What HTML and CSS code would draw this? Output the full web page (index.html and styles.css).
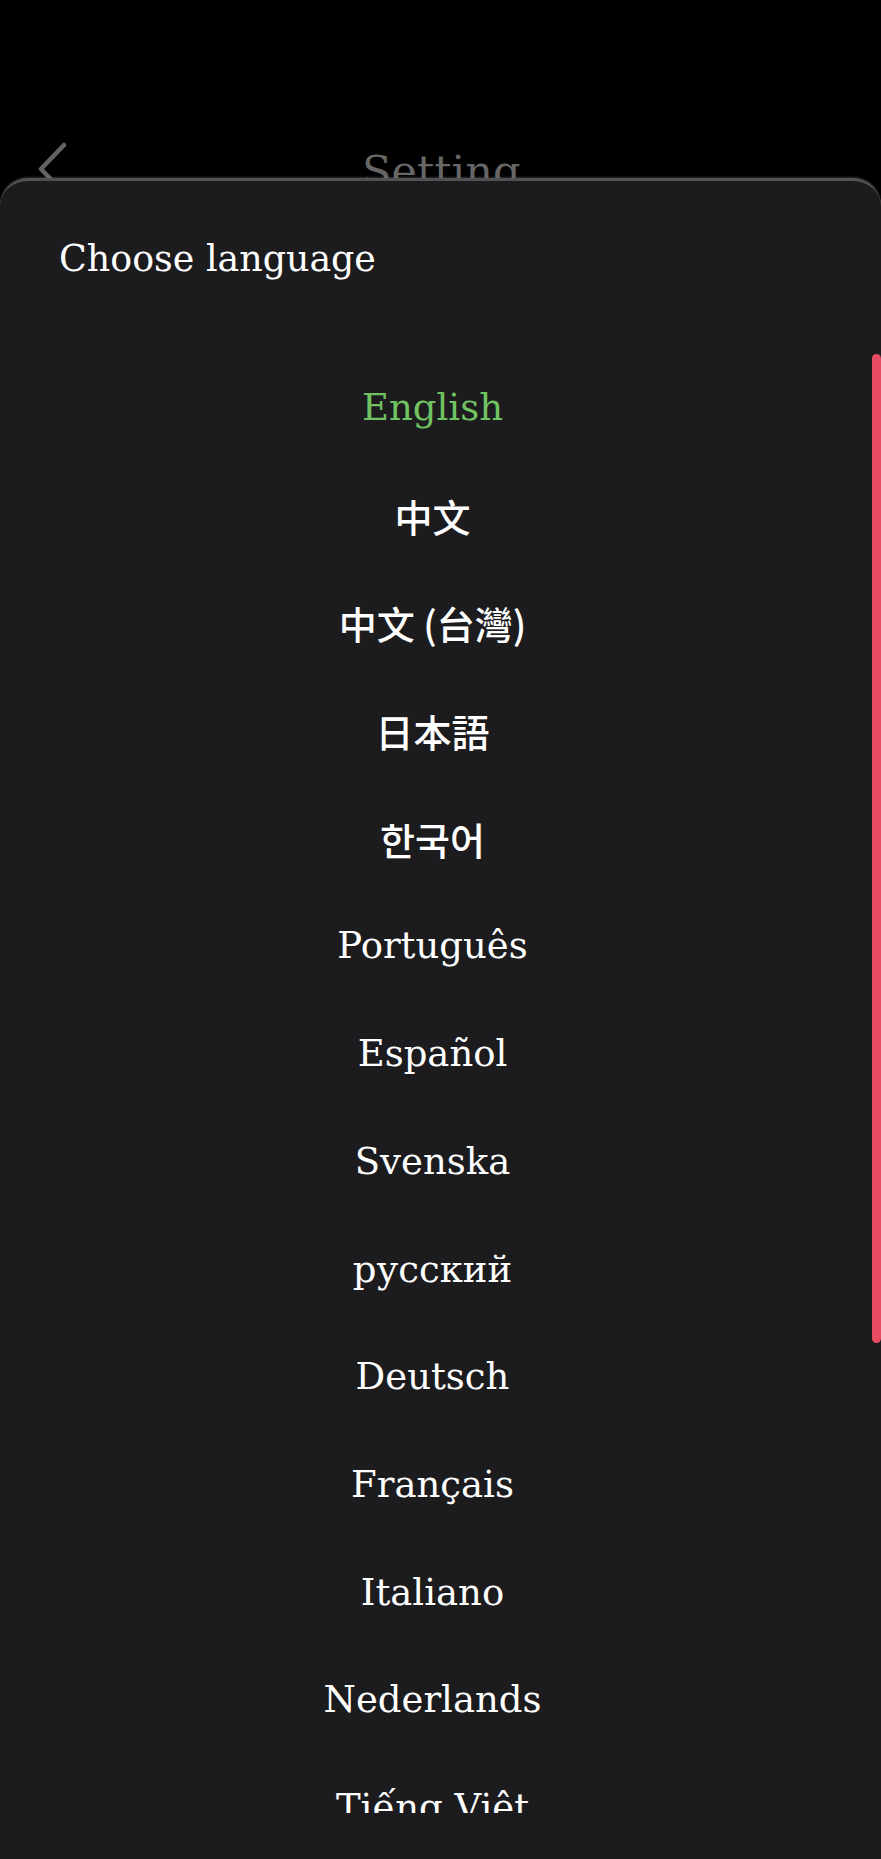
FILE: index.html
```html
<!DOCTYPE html>
<html lang="en">
<head>
    <meta charset="UTF-8">
    <meta name="viewport" content="width=device-width, initial-scale=1.0">
    <title>Setting</title>
    <link rel="stylesheet" href="styles.css">
</head>
<body>
    <!-- Header behind the sheet -->
    <header class="topbar">
        <svg class="back" width="40" height="60" viewBox="0 0 40 60">
            <path d="M26 4 L3 28 L26 52" fill="none" stroke="#636363" stroke-width="4.5" stroke-linecap="round" stroke-linejoin="round"/>
        </svg>
        <h1 class="title">Setting</h1>
    </header>

    <!-- Bottom sheet -->
    <div class="sheet">
        <h2 class="sheet-title">Choose language</h2>
        <ul class="lang-list">
            <li class="active">English</li>
            <li class="cjk" lang="zh-CN">中文</li>
            <li class="cjk tc" lang="zh-TW">中文 (台灣)</li>
            <li class="cjk jp" lang="ja">日本語</li>
            <li class="cjk kr" lang="ko">한국어</li>
            <li>Português</li>
            <li>Español</li>
            <li>Svenska</li>
            <li>русский</li>
            <li>Deutsch</li>
            <li>Français</li>
            <li>Italiano</li>
            <li>Nederlands</li>
            <li>Tiếng Việt</li>
        </ul>
        <div class="scroll-thumb"></div>
    </div>
</body>
</html>
```

FILE: styles.css
```css
* {
    margin: 0;
    padding: 0;
    box-sizing: border-box;
}

html, body {
    width: 881px;
    height: 1859px;
    overflow: hidden;
}
body {
    background-color: #000;
    font-family: "DejaVu Serif", "Noto Sans CJK SC", serif;
    color: #fff;
    position: relative;
}

/* Header */
.topbar {
    display: flex;
    align-items: flex-start;
    height: 190px;
    padding-top: 141px;
    padding-left: 38px;
}
.back {
    flex: none;
}
.title {
    font-weight: normal;
    font-size: 43px;
    line-height: 50px;
    color: #666;
    margin-left: 284px;
    margin-top: 5px;
}

/* Bottom sheet */
.sheet {
    position: absolute;
    top: 178px;
    left: 0;
    right: 0;
    bottom: 0;
    background-color: #1c1c1e;
    border-top: 3px solid #515153;
    border-radius: 28px 28px 0 0;
    box-shadow: 0 -1px 2px rgba(120, 120, 120, 0.4);
}
.sheet-title {
    font-weight: normal;
    font-size: 36.4px;
    line-height: 50px;
    padding: 53px 0 0 59px;
}

.lang-list {
    list-style: none;
    margin-top: 70px;
    padding-right: 16px;
    height: 1459px;
    overflow: hidden;
}
.lang-list li {
    height: 107.7px;
    line-height: 107.7px;
    text-align: center;
    font-size: 37px;
    white-space: nowrap;
}
.lang-list li.active {
    color: #71c262;
}
.lang-list li.cjk {
    font-family: "Noto Sans CJK SC", sans-serif;
    font-size: 38px;
    font-weight: 500;
}
.lang-list li.tc {
    font-family: "Noto Sans CJK TC", sans-serif;
}
.lang-list li.jp {
    font-family: "Noto Sans CJK JP", sans-serif;
}
.lang-list li.kr {
    font-family: "Noto Sans CJK KR", sans-serif;
}

.scroll-thumb {
    position: absolute;
    right: 0;
    top: 173px;
    width: 9px;
    height: 989px;
    border-radius: 5px;
    background-color: #e64b63;
}
```
